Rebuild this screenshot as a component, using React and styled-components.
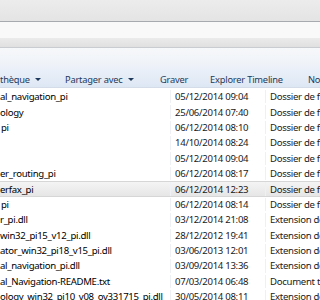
import styled, { createGlobalStyle } from "styled-components";

const Global = createGlobalStyle`
  html, body {
    margin: 0;
    padding: 0;
    background: #ffffff;
    overflow: hidden;
  }
  body {
    font-family: "Noto Sans", "Liberation Sans", sans-serif;
  }
`;

const rows = [
  { name: "al_navigation_pi", date: "05/12/2014 09:04", type: "Dossier de fichiers" },
  { name: "ology", date: "25/06/2014 07:40", type: "Dossier de fichiers" },
  { name: "pi", date: "06/12/2014 08:10", type: "Dossier de fichiers", indent: 1 },
  { name: "", date: "14/10/2014 08:24", type: "Dossier de fichiers" },
  { name: "", date: "05/12/2014 09:04", type: "Dossier de fichiers" },
  { name: "er_routing_pi", date: "06/12/2014 08:17", type: "Dossier de fichiers" },
  { name: "erfax_pi", date: "06/12/2014 12:23", type: "Dossier de fichiers", selected: true },
  { name: "pi", date: "06/12/2014 08:14", type: "Dossier de fichiers", indent: 1 },
  { name: "r_pi.dll", date: "03/12/2014 21:08", type: "Extension de l'application" },
  { name: "win32_pi15_v12_pi.dll", date: "28/12/2012 19:41", type: "Extension de l'application" },
  { name: "ator_win32_pi18_v15_pi.dll", date: "03/06/2013 12:01", type: "Extension de l'application" },
  { name: "al_navigation_pi.dll", date: "03/09/2014 13:36", type: "Extension de l'application" },
  { name: "al_Navigation-README.txt", date: "07/03/2014 06:48", type: "Document texte" },
  { name: "ology_win32_pi10_v08_ov331715_pi.dll", date: "30/05/2014 08:11", type: "Extension de l'application" },
];

const Window = styled.div`
  width: 320px;
  height: 300px;
  display: flex;
  flex-direction: column;
  overflow: hidden;
`;

const TitleBand = styled.div`
  height: 21px;
  flex: none;
  background: linear-gradient(#ececec, #e4e4e4);
  border-bottom: 1px solid #a7abb0;
`;

const AddressBand = styled.div`
  height: 16px;
  flex: none;
  background: #f9f9f9;
`;

const ShadeBand = styled.div`
  height: 9px;
  flex: none;
  background: linear-gradient(#ebebeb, #e0e0e0);
  border-bottom: 1px solid #c9ccd0;
`;

const GapBand = styled.div`
  height: 18px;
  flex: none;
  background: linear-gradient(#f6f8fa, #eef2f8);
`;

const Toolbar = styled.div`
  height: 22px;
  flex: none;
  display: flex;
  align-items: center;
  background: linear-gradient(#edf2f9, #dde7f4);
  border-bottom: 1px solid #d3dce8;
  color: #1e395b;
  font-size: 9.3px;
  letter-spacing: -0.2px;
  white-space: nowrap;
  padding-top: 6px;
  box-sizing: border-box;
`;

const ToolItem = styled.div`
  flex: none;
  width: ${(p) => p.w}px;
  display: flex;
  align-items: center;
  gap: 5px;
`;

const Caret = styled.span`
  width: 0;
  height: 0;
  border-left: 3px solid transparent;
  border-right: 3px solid transparent;
  border-top: 3px solid #1e395b;
`;

const List = styled.div`
  flex: 1;
  padding-top: 1px;
`;

const Row = styled.div`
  height: 15.4px;
  box-sizing: border-box;
  display: grid;
  grid-template-columns: 171px 95px 1fr;
  align-items: center;
  font-size: 9.6px;
  letter-spacing: -0.3px;
  white-space: nowrap;
  background: ${(p) => (p.selected ? "linear-gradient(#f4f4f4, #e6e6e6)" : "transparent")};
  border-top: 1px solid ${(p) => (p.selected ? "#d6d6d6" : "transparent")};
  border-bottom: 1px solid ${(p) => (p.selected ? "#d6d6d6" : "transparent")};
`;

const Cell = styled.div`
  overflow: hidden;
  padding-left: ${(p) => p.pad || 0}px;
  color: ${(p) => p.color || "#000"};
  border-right: ${(p) => (p.line ? "1px solid #edf0f4" : "none")};
  height: 100%;
  display: flex;
  align-items: center;
`;

export default function App() {
  return (
    <Window>
      <Global />
      <TitleBand />
      <AddressBand />
      <ShadeBand />
      <GapBand />
      <Toolbar>
        <ToolItem w={65}>
          thèque <Caret />
        </ToolItem>
        <ToolItem w={95}>
          Partager avec <Caret />
        </ToolItem>
        <ToolItem w={50}>Graver</ToolItem>
        <ToolItem w={98}>Explorer Timeline</ToolItem>
        <ToolItem w={60}>Nouveau dossier</ToolItem>
      </Toolbar>
      <List>
        {rows.map((r, i) => (
          <Row key={i} selected={r.selected}>
            <Cell pad={r.indent} line>
              {r.name}
            </Cell>
            <Cell pad={4} color="#1a1a1a" line>
              {r.date}
            </Cell>
            <Cell pad={4} color="#1a1a1a">
              {r.type}
            </Cell>
          </Row>
        ))}
      </List>
    </Window>
  );
}
